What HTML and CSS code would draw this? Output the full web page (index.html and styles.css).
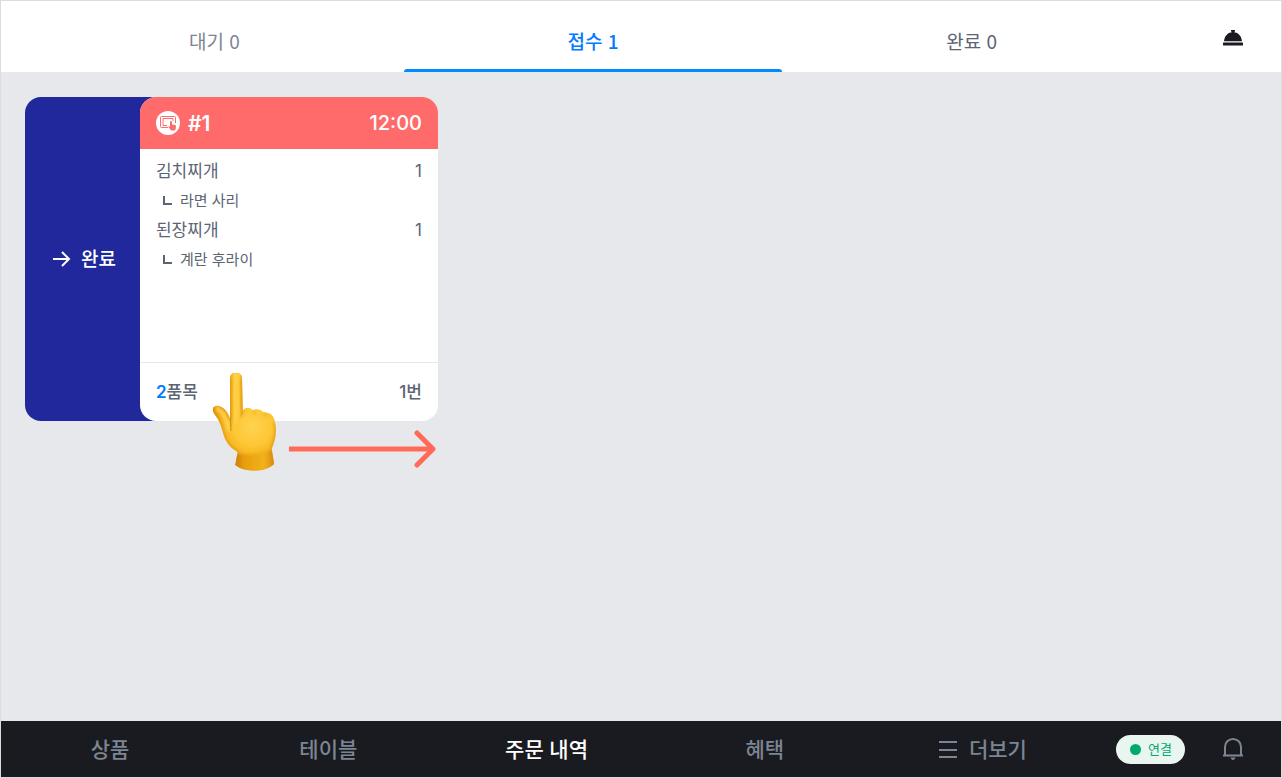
FILE: index.html
```html
<!DOCTYPE html>
<html lang="ko">
<head>
	<meta charset="UTF-8">
	<meta name="viewport" content="width=device-width, initial-scale=1">
	<title>주문 내역</title>
	<link rel="stylesheet" href="styles.css">
</head>
<body>
	<div class="app">
		<header class="header">
			<div class="tabs" role="tablist">
				<button class="tab" type="button" role="tab">대기 0</button>
				<button class="tab active" type="button" role="tab" aria-selected="true">접수 1</button>
				<button class="tab done" type="button" role="tab">완료 0</button>
			</div>
			<button class="icon-btn call" type="button" aria-label="호출">
				<svg width="20" height="16" viewBox="0 0 20 16" fill="#1a1b20">
					<path d="M8 0h4v1.300l-1 1c4.300.5 7.300 3.500 8 9H1c.7-5.500 3.700-8.500 8-9l-1-1z"/>
					<rect y="12.500" width="20" height="3" rx="0.500"/>
				</svg>
			</button>
		</header>

		<main class="board">
			<div class="swipe">
				<div class="swipe-action">
					<svg width="18" height="16" viewBox="0 0 18 16" fill="none" stroke="#fff" stroke-width="2">
						<path d="M0 8h16M9 1l7 7-7 7"/>
					</svg>
					<span>완료</span>
				</div>
				<article class="order">
					<div class="order-head">
						<svg width="24" height="24" viewBox="0 0 24 24">
							<circle cx="12" cy="12" r="12" fill="#fff"/>
							<g fill="none" stroke="#ff6b6b">
								<path d="M12 16.500H5.500a1 1 0 0 1-1-1v-9a1 1 0 0 1 1-1h13a1 1 0 0 1 1 1V12"/>
								<path d="M11 14.500H7v-7h10V10"/>
							</g>
							<path d="M12 15.500h2V11c0-1.500 2-1.500 2 0v2.500l3 .5c.7.1 1 .6 1 1.300l-.5 3.200c-.1.700-.5 1-1.100 1h-2.600c-.5 0-.8-.1-1.100-.5z" fill="#ff6b6b"/>
						</svg>
						<strong class="order-no">#1</strong>
						<time class="order-time">12:00</time>
					</div>
					<ul class="items">
						<li>
							<div class="item"><span>김치찌개</span><span>1</span></div>
							<div class="option"><i class="elbow"></i>라면 사리</div>
						</li>
						<li>
							<div class="item"><span>된장찌개</span><span>1</span></div>
							<div class="option"><i class="elbow"></i>계란 후라이</div>
						</li>
					</ul>
					<div class="order-foot">
						<span><b>2</b>품목</span>
						<span>1번</span>
					</div>
				</article>

				<!-- 스와이프 안내 -->
				<div class="guide">
					<svg class="hand" width="65" height="99" viewBox="36 36 195 297">
						<defs>
							<radialGradient id="skin" gradientUnits="userSpaceOnUse" cx="158" cy="200" r="125">
								<stop offset="0" stop-color="#ffd351"/>
								<stop offset="0.45" stop-color="#fdc735"/>
								<stop offset="0.8" stop-color="#f3ae17"/>
								<stop offset="1" stop-color="#e49a0c"/>
							</radialGradient>
							<linearGradient id="finger" x1="0" x2="1" y1="0" y2="0">
								<stop offset="0" stop-color="#eca812"/>
								<stop offset="0.35" stop-color="#ffcf45"/>
								<stop offset="0.7" stop-color="#ffcc40"/>
								<stop offset="1" stop-color="#e99f10"/>
							</linearGradient>
							<linearGradient id="wrist" x1="0" x2="1" y1="0" y2="0">
								<stop offset="0" stop-color="#bd6a05"/>
								<stop offset="0.25" stop-color="#e89d0b"/>
								<stop offset="0.7" stop-color="#f2b11c"/>
								<stop offset="1" stop-color="#cc7b08"/>
							</linearGradient>
							<filter id="soft" x="-20%" y="-20%" width="140%" height="140%">
								<feGaussianBlur stdDeviation="4"/>
							</filter>
							<clipPath id="shape">
								<path d="M90 57C90 44 96 38 108 38C120 38 126 45 126 57L128 153C136 141 151 140 158 151C169 145 184 148 190 157C211 156 222 168 225 187C231 215 227 241 215 266L222 312C196 338 134 338 106 315L113 276C91 263 79 249 72 228C65 207 62 188 48 169C41 160 35 150 40 142C49 132 66 139 76 150C84 159 88 169 90 179Z"/>
							</clipPath>
						</defs>
						<g clip-path="url(#shape)">
							<rect x="36" y="36" width="195" height="300" fill="url(#skin)"/>
							<path d="M90 36h37l2 124c-10 14-12 29-25 34l-14 12z" fill="url(#finger)"/>
							<path d="M105 280q55 10 118-12l12 72H95z" fill="url(#wrist)" filter="url(#soft)"/>
							<path d="M48 145c24 5 34 34 40 67" fill="none" stroke="#ffd04a" stroke-width="15" filter="url(#soft)"/>
							<path d="M129 153c1 8-3 13-6 19M158 151q6 5 7 12M190 157q6 5 7 13" fill="none" stroke="#dc940e" stroke-width="3" filter="url(#soft)"/>
							<path d="M90 169q3 23 3 44" fill="none" stroke="#c98311" stroke-width="3"/>
							<path d="M90 57v122C86 164 77 147 61 140M40 146c0 17 16 26 23 51 9 41 19 60 50 79l-7 39M128 153l-2-96M225 187c5 29 1 54-10 79l7 46" fill="none" stroke="#d88c0d" stroke-width="5" filter="url(#soft)"/>
						</g>
					</svg>
					<svg class="arrow" width="148" height="38" viewBox="0 0 148 38" fill="none" stroke="#ff6b57" stroke-width="5">
						<path d="M0 19h143"/>
						<path d="M128 3l16 16-16 16" stroke-linecap="round" stroke-linejoin="round"/>
					</svg>
				</div>
			</div>
		</main>

		<footer class="footer">
			<nav class="menu">
				<a href="#">상품</a>
				<a href="#">테이블</a>
				<a href="#" class="active">주문 내역</a>
				<a href="#">혜택</a>
				<a href="#">
					<svg width="18" height="18" viewBox="0 0 18 18" stroke="currentColor" stroke-width="2">
						<path d="M0 2h18M0 10h18M0 17h18"/>
					</svg>
					더보기
				</a>
			</nav>
			<div class="status"><i class="dot"></i><span>연결</span></div>
			<button class="icon-btn bell" type="button" aria-label="알림">
				<svg width="20" height="22" viewBox="0 0 20 22" fill="none" stroke="#7c8593" stroke-width="2">
					<path d="M2 17V9c0-4.500 3.500-8 8-8s8 3.500 8 8v8M0 17.500h20"/>
					<path d="M7.500 19.500h5c-.5 1.500-1.300 2.500-2.500 2.500s-2-1-2.500-2.500z" fill="#7c8593" stroke="none"/>
				</svg>
			</button>
		</footer>
	</div>
</body>
</html>
```
FILE: styles.css
```css
*{
	margin: 0;
	padding: 0;
	box-sizing: border-box;
}
body{
	font-family: Inter, "Noto Sans CJK KR", sans-serif;
	color: #5b6473;
}
ul{
	list-style: none;
}
a{
	text-decoration: none;
}
button{
	font: inherit;
	color: inherit;
	background: none;
	border: 0;
	cursor: pointer;
}
svg{
	display: block;
	flex: none;
}
.app{
	display: flex;
	flex-direction: column;
	min-height: 100vh;
	border: 1px solid #dcdcdc;
	background: #e6e8eb;
}

/* 상단 탭 */
.header{
	display: flex;
	align-items: stretch;
	height: 71px;
	padding: 0 38px 0 24px;
	background: #fff;
}
.tabs{
	flex: 1;
	display: grid;
	grid-template-columns: repeat(3, 1fr);
}
.tab{
	padding-top: 10px;
	border-bottom: 3px solid transparent;
	font-family: "Noto Sans CJK KR", sans-serif;
	font-size: 19px;
}
.tab:first-child{
	color: #7c8593;
}
.tab.active{
	position: relative;
	color: #007aff;
	font-weight: 500;
}
.tab.active::after{
	content: "";
	position: absolute;
	left: 0;
	right: 0;
	bottom: -3px;
	height: 3px;
	border-radius: 3px 3px 0 0;
	background: #008cff;
}
.icon-btn{
	display: flex;
	align-items: center;
}
.call{
	margin-left: 62px;
	padding-top: 2px;
}

/* 주문 카드 */
.board{
	flex: 1;
	padding: 25px 24px;
}
.swipe{
	position: relative;
	display: flex;
	width: 413px;
	max-width: 100%;
}
.swipe-action{
	flex: none;
	display: flex;
	align-items: center;
	gap: 10px;
	margin-right: -20px;
	padding: 0 44px 0 28px;
	border-radius: 16px 0 0 16px;
	background: #20289b;
	color: #fff;
	font-size: 19px;
	font-weight: 500;
}
.swipe-action span{
	padding-bottom: 4px;
}
.order{
	position: relative;
	flex: 1;
	display: flex;
	flex-direction: column;
	min-height: 324px;
	overflow: hidden;
	border-radius: 16px;
	background: #fff;
}
.order-head{
	display: flex;
	align-items: center;
	gap: 8px;
	height: 52px;
	padding: 0 16px;
	background: #ff6b6b;
	color: #fff;
	font-size: 20px;
	font-weight: 500;
}
.order-no{
	font-size: 21px;
	font-weight: 600;
}
.order-time{
	margin-left: auto;
}
.items{
	flex: 1;
	padding: 8px 16px;
}
.item{
	display: flex;
	justify-content: space-between;
	font-size: 17px;
	line-height: 28px;
}
.option{
	display: flex;
	align-items: center;
	gap: 8px;
	padding-left: 7px;
	font-size: 15px;
	line-height: 31px;
}
.elbow{
	width: 9px;
	height: 9px;
	border-left: 2px solid #5b6473;
	border-bottom: 2px solid #5b6473;
}
.order-foot{
	display: flex;
	justify-content: space-between;
	align-items: center;
	height: 59px;
	padding: 0 16px 4px;
	border-top: 1px solid #e6e8eb;
	font-size: 17px;
	font-weight: 500;
}
.order-foot b{
	color: #007aff;
	font-weight: 600;
}
.guide{
	position: absolute;
	left: 187px;
	top: 275px;
	display: flex;
	align-items: flex-end;
	gap: 12px;
}
.arrow{
	margin-bottom: 3px;
}

/* 하단 메뉴 */
.footer{
	display: flex;
	align-items: center;
	height: 56px;
	padding-right: 38px;
	background: #1a1b20;
}
.menu{
	flex: 1;
	display: grid;
	grid-template-columns: repeat(5, 1fr);
	padding-bottom: 3px;
}
.menu a{
	display: flex;
	justify-content: center;
	align-items: center;
	gap: 12px;
	color: #7c8593;
	font-size: 21px;
	font-weight: 500;
}
.menu a.active{
	color: #fff;
}
.menu svg{
	margin-top: 3px;
}
.status{
	display: flex;
	align-items: center;
	justify-content: center;
	gap: 7px;
	height: 29px;
	margin-left: 24px;
	padding: 0 13px 0 14px;
	border-radius: 15px;
	background: #e9f5ef;
	color: #00a970;
	font-size: 13px;
}
.status span{
	padding-bottom: 2px;
}
.dot{
	width: 11px;
	height: 11px;
	border-radius: 50%;
	background: #00a970;
}
.bell{
	margin-left: 38px;
}
```
